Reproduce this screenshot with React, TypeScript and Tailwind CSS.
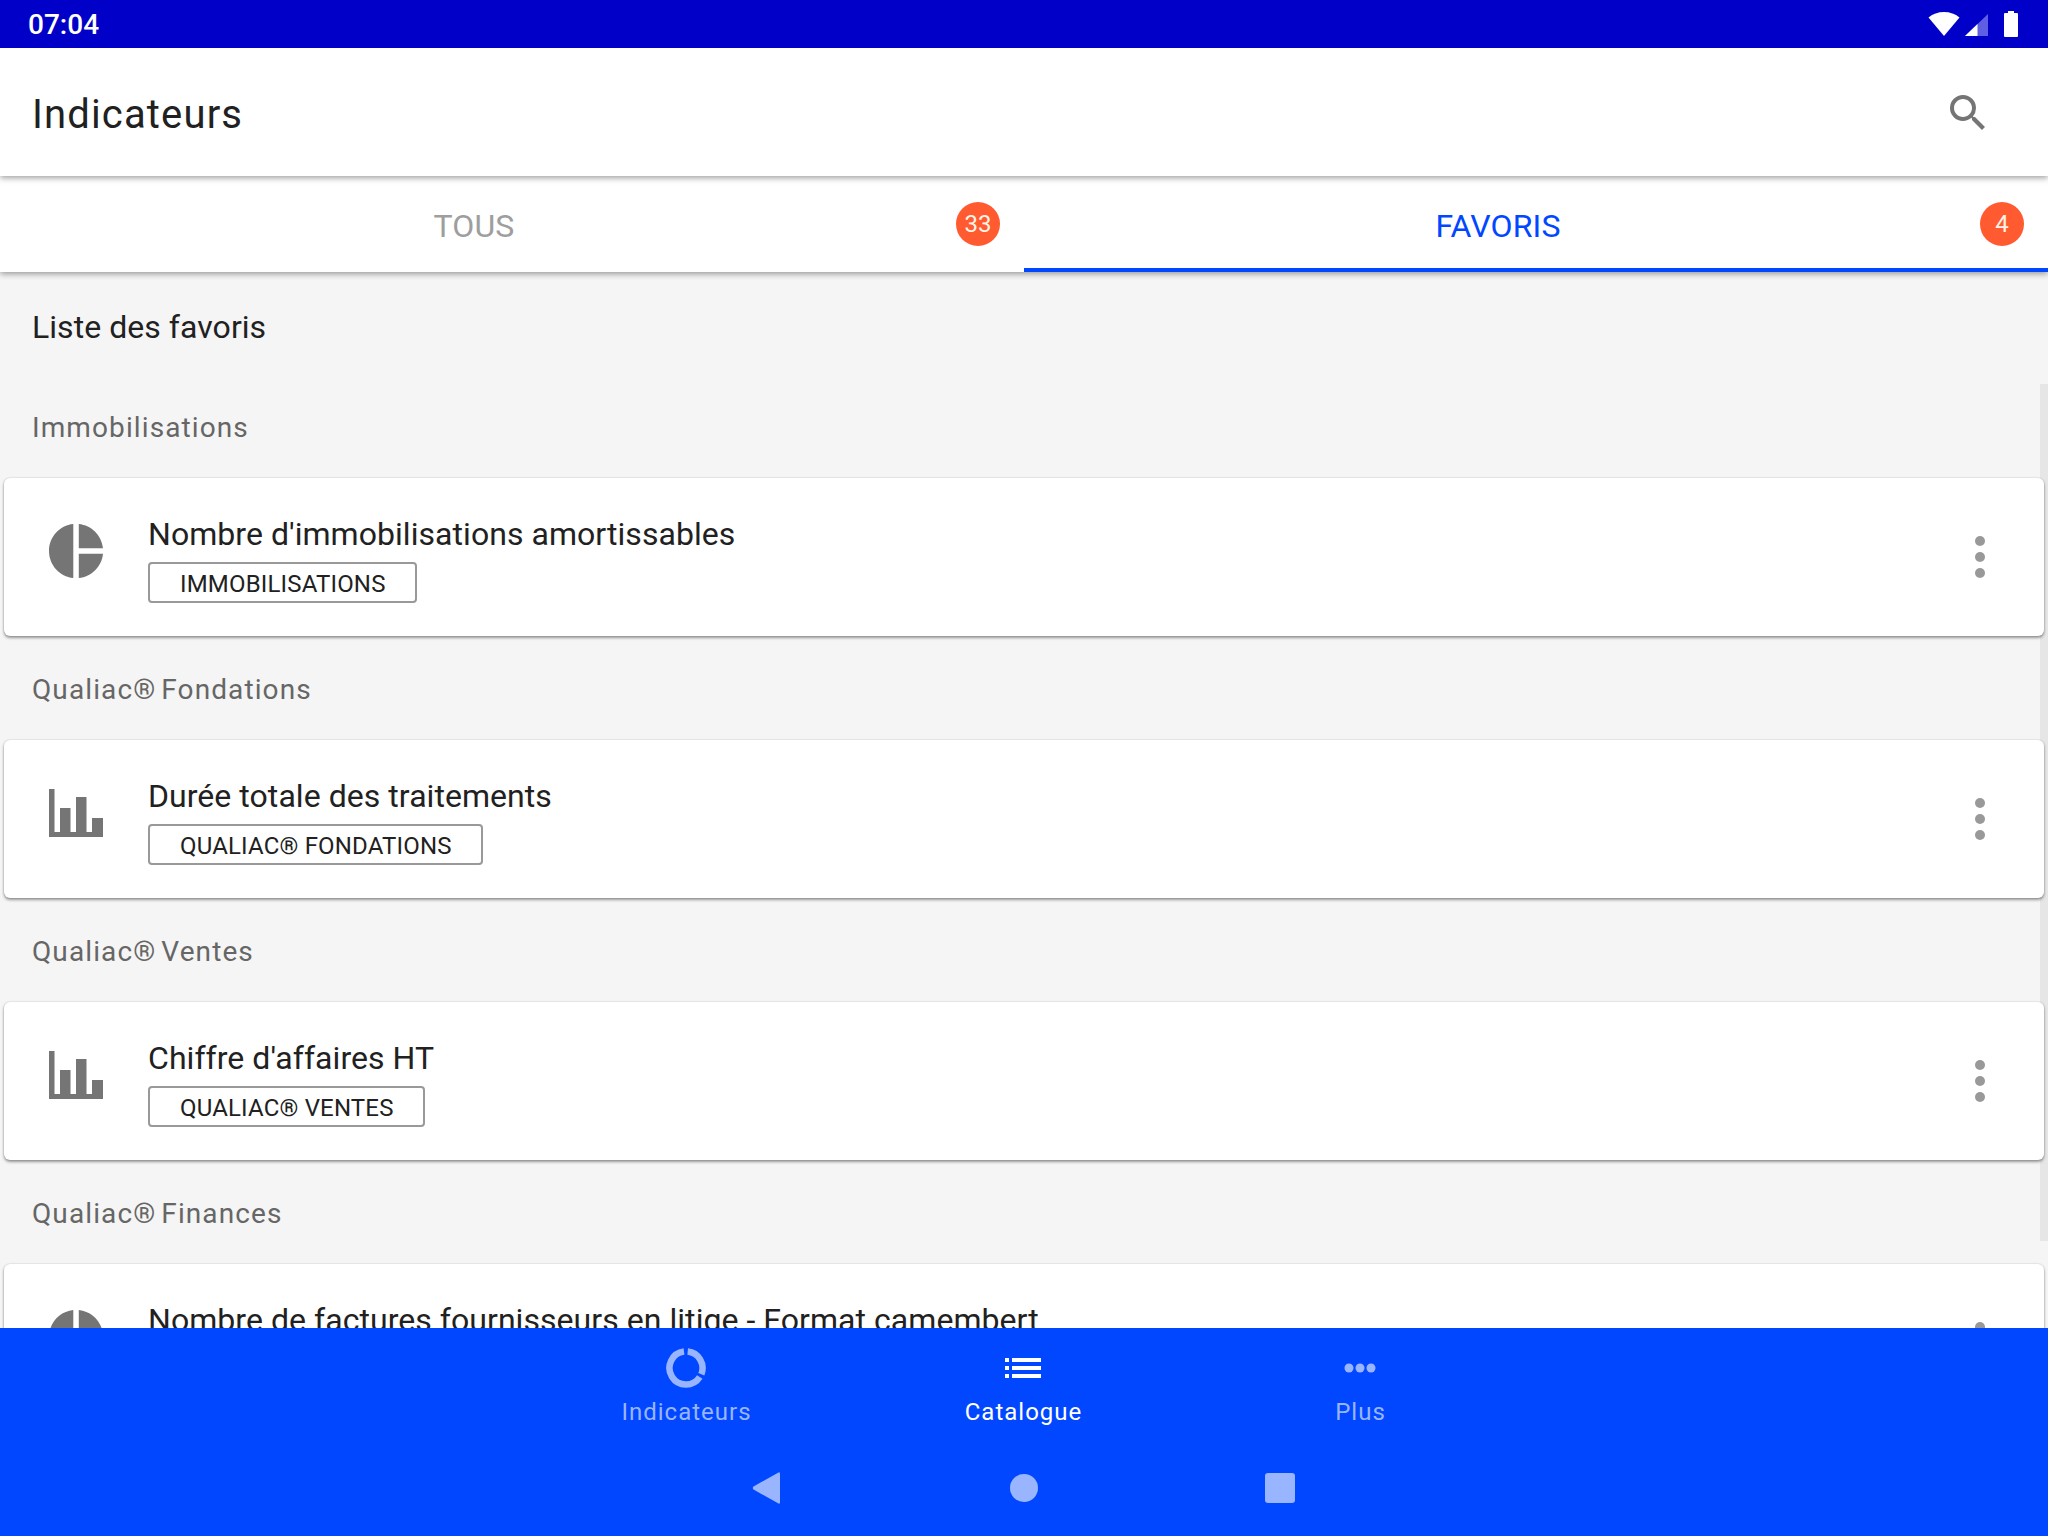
import type { ReactNode } from "react";

export default function App() {
  return (
    <div className="w-[2048px] h-[1536px] flex flex-col overflow-hidden bg-[#f5f5f5] font-['Roboto',sans-serif] relative">
      <StatusBar />
      <header className="h-[128px] shrink-0 bg-white flex items-center justify-between pl-[32px] pr-[56px] z-30 shadow-[0_2px_6px_rgba(0,0,0,0.38)]">
        <h1 className="text-[40px] leading-[48px] font-normal tracking-[1.15px] text-[#212121] mt-[6px]">Indicateurs</h1>
        <svg width="48" height="48" viewBox="0 0 24 24" fill="#757575" className="mt-[2px]">
          <path d="M15.5 14h-.79l-.28-.27A6.471 6.471 0 0 0 16 9.5 6.5 6.5 0 1 0 9.5 16c1.61 0 3.09-.59 4.23-1.57l.27.28v.79l5 4.99L20.49 19l-4.99-5zm-6 0C7.01 14 5 11.99 5 9.5S7.01 5 9.5 5 14 7.01 14 9.5 11.99 14 9.5 14z" />
        </svg>
      </header>
      <nav className="h-[96px] shrink-0 bg-white flex z-20 shadow-[0_2px_6px_rgba(0,0,0,0.38)]">
        <Tab label="TOUS" count="33" />
        <Tab label="FAVORIS" count="4" active />
      </nav>
      <main className="flex-1 overflow-hidden relative">
        <div className="absolute right-0 top-[112px] w-[8px] h-[857px] bg-[#e6e6e6]" />
        <div className="relative">
          <h2 className="h-[102px] pt-[8px] pl-[32px] flex items-center text-[32px] font-normal tracking-[0.05px] text-[#212121]">Liste des favoris</h2>
          <Section title="Immobilisations" name="Nombre d'immobilisations amortissables" tag="IMMOBILISATIONS" kind="pie" />
          <Section brand title="Fondations" name="Durée totale des traitements" tag="QUALIAC® FONDATIONS" kind="bar" />
          <Section brand title="Ventes" name="Chiffre d'affaires HT" tag="QUALIAC® VENTES" kind="bar" />
          <Section brand title="Finances" name="Nombre de factures fournisseurs en litige - Format camembert" tag="QUALIAC® FINANCES" kind="pie" />
        </div>
      </main>
      <footer className="h-[208px] shrink-0 bg-[#0047ff] flex flex-col z-30">
        <div className="h-[112px] flex justify-center">
          <NavItem label="Indicateurs"><RingIcon /></NavItem>
          <NavItem label="Catalogue" active><ListIcon /></NavItem>
          <NavItem label="Plus"><DotsIcon /></NavItem>
        </div>
        <div className="h-[96px] flex justify-center items-center">
          <div className="w-[256px] flex justify-center pr-[4px]">
            <svg width="28" height="34" viewBox="0 0 28 34" fill="#99b5ff"><path d="M26.5 1.5 Q28 0.5 28 3 V31 Q28 33.5 26.5 32.5 L1.5 18.5 Q0 17 1.5 15.5 Z" /></svg>
          </div>
          <div className="w-[256px] flex justify-center">
            <div className="w-[28px] h-[28px] rounded-full bg-[#99b5ff]" />
          </div>
          <div className="w-[256px] flex justify-center">
            <div className="w-[30px] h-[30px] rounded-[3px] bg-[#99b5ff]" />
          </div>
        </div>
      </footer>
    </div>
  );
}

function StatusBar() {
  return (
    <div className="h-[48px] shrink-0 bg-[#0000c8] flex items-center justify-between pl-[28px] pr-[30px] z-40">
      <span className="text-[28px] leading-[48px] font-medium text-white mt-[2px]">07:04</span>
      <div className="flex items-center">
        <svg width="32" height="26" viewBox="0 0 32 26" fill="#fff"><path d="M16 25 L0.5 6.5 Q7 1 16 1 Q25 1 31.5 6.5 Z" /></svg>
        <svg width="23" height="22" viewBox="0 0 23 22" className="ml-[5px] mt-[2px]">
          <path d="M23 0 V22 H0 Z" fill="#5f5fe4" />
          <path d="M12.5 10 V22 H0 Z" fill="#fff" />
        </svg>
        <svg width="14" height="26" viewBox="0 0 14 26" fill="#fff" className="ml-[16px]"><path d="M4 0 H10 V2 H13 Q14 2 14 3 V25 Q14 26 13 26 H1 Q0 26 0 25 V3 Q0 2 1 2 H4 Z" /></svg>
      </div>
    </div>
  );
}

function Tab({ label, count, active }: { label: string; count: string; active?: boolean }) {
  return (
    <div className="flex-1 relative flex items-center justify-center pr-[76px]">
      <span className={`text-[32px] leading-[40px] font-normal tracking-[0.15px] mt-[3px] ${active ? "text-[#0047ff]" : "text-[#9e9e9e]"}`}>{label}</span>
      <span className="absolute right-[24px] top-[26px] w-[44px] h-[44px] rounded-full bg-[#ff5a30] flex items-center justify-center text-[24px] text-[#fff3e6]">{count}</span>
      {active && <span className="absolute left-0 right-0 bottom-0 h-[4px] bg-[#0047ff]" />}
    </div>
  );
}

function Section({ title, name, tag, kind, brand }: { title: string; name: string; tag: string; kind: "pie" | "bar"; brand?: boolean }) {
  return (
    <section>
      <h3 className="h-[104px] pt-[4px] pl-[32px] flex items-center text-[28px] font-normal tracking-[1.1px] text-[#666666]">
        <span className="whitespace-pre">
          {brand ? <>Qualiac<span className="tracking-[-1.9px]">®</span>{" "}</> : null}{title}
        </span>
      </h3>
      <div className="mx-[4px] h-[158px] bg-white rounded-[6px] shadow-[0_2px_3px_rgba(0,0,0,0.38),0_0_2px_rgba(0,0,0,0.2)] flex">
        <div className="w-[144px] pl-[45px] pb-[12px] flex items-center shrink-0">
          {kind === "pie" ? <PieIcon /> : <BarIcon />}
        </div>
        <div className="flex-1 pt-[36px]">
          <div className="text-[32px] leading-[40px] tracking-[0.05px] text-[#212121]">{name}</div>
          <div className="mt-[8px]">
            <span className="inline-block h-[41px] pl-[30px] pr-[29px] border-2 border-[#999999] rounded-[4px] text-[24px] leading-[40px] tracking-[0.17px] text-[#212121]">{tag}</span>
          </div>
        </div>
        <div className="w-[64px] shrink-0 relative flex flex-col items-center justify-center gap-[6px] -translate-x-[32px]">
          <i className="block w-[10px] h-[10px] rounded-full bg-[#999999]" />
          <i className="block w-[10px] h-[10px] rounded-full bg-[#999999]" />
          <i className="block w-[10px] h-[10px] rounded-full bg-[#999999]" />
        </div>
      </div>
    </section>
  );
}

function PieIcon() {
  return (
    <svg width="54" height="54" viewBox="2 2 20 20" fill="#757575">
      <path d="M11 2v20c-5.07-.5-9-4.79-9-10s3.93-9.5 9-10zm2.03 0v8.99H22c-.47-4.74-4.24-8.52-8.97-8.99zm0 11.01V22c4.74-.47 8.5-4.25 8.97-8.99h-8.97z" />
    </svg>
  );
}

function BarIcon() {
  return (
    <svg width="54" height="48" viewBox="0 0 54 48" fill="#757575">
      <path d="M0 0H5.5V43H11V19H21.5V43H27V8H37.5V43H43V29H54V48H0Z" />
    </svg>
  );
}

function NavItem({ label, active, children }: { label: string; active?: boolean; children: ReactNode }) {
  return (
    <div className="w-[337px] flex flex-col items-center pt-[20px]">
      <div className="h-[40px] flex items-center justify-center -translate-x-[1px]">{children}</div>
      <span className={`mt-[8px] text-[24px] leading-[32px] tracking-[1px] -translate-x-[0.5px] ${active ? "text-white" : "text-[#99b5ff]"}`}>{label}</span>
    </div>
  );
}

function RingIcon() {
  return (
    <svg width="40" height="40" viewBox="0 0 40 40" fill="none" stroke="#99b5ff" strokeWidth="6.5">
      <path d="M18 3.6 A16.5 16.5 0 1 0 33.8 29" />
      <path d="M21.7 3.6 A16.5 16.5 0 0 1 35.3 26.2" />
    </svg>
  );
}

function ListIcon() {
  return (
    <svg width="36" height="20" viewBox="0 0 36 20" fill="#fff">
      <path d="M0 0H4V4H0ZM7 0H36V4H7ZM0 8H4V12H0ZM7 8H36V12H7ZM0 16H4V20H0ZM7 16H36V20H7Z" />
    </svg>
  );
}

function DotsIcon() {
  return (
    <svg width="32" height="10" viewBox="0 0 32 10" fill="#99b5ff">
      <circle cx="5" cy="5" r="4.5" /><circle cx="16" cy="5" r="4.5" /><circle cx="27" cy="5" r="4.5" />
    </svg>
  );
}
